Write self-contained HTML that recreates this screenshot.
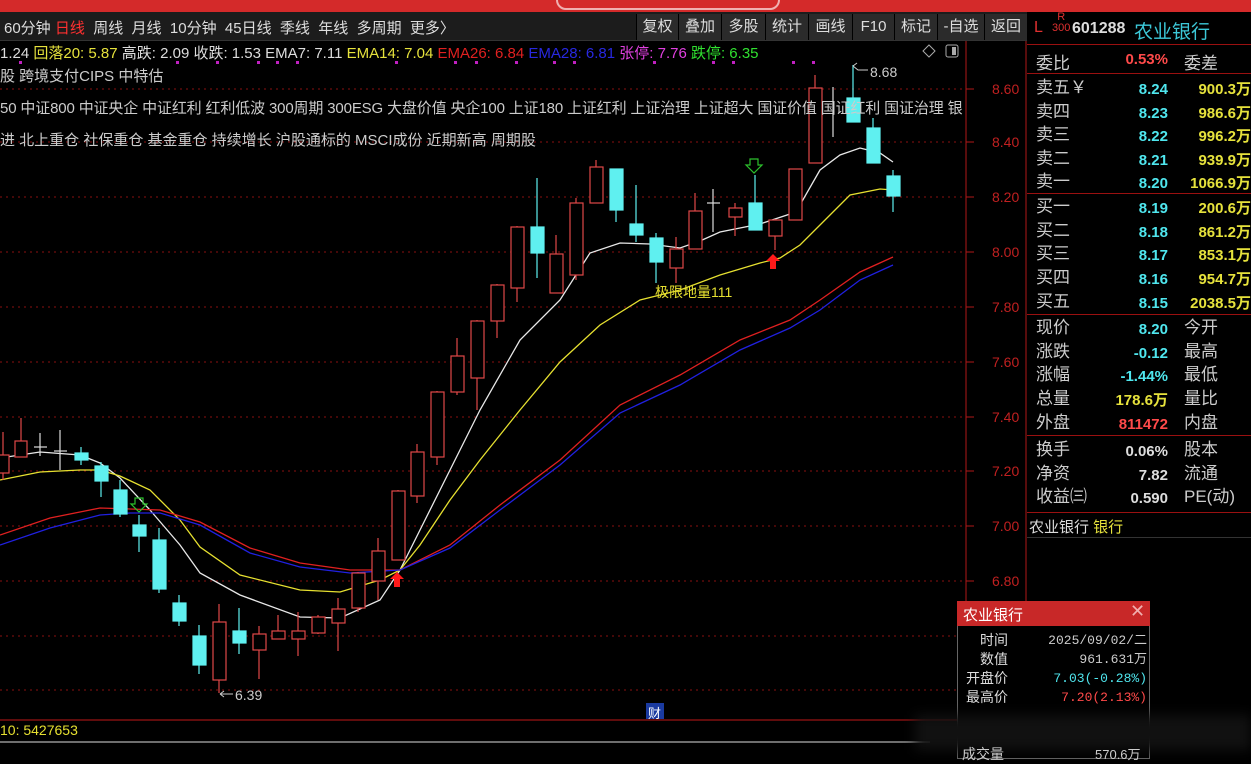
<!DOCTYPE html>
<html><head><meta charset="utf-8"><style>
*{margin:0;padding:0;box-sizing:border-box}
body{width:1251px;height:759px;background:#000;overflow:hidden;position:relative;font-family:"Liberation Sans","Noto Sans CJK SC",sans-serif;color:#ccc}
.a{position:absolute;white-space:nowrap}
#top{left:0;top:0;width:1251px;height:12px;background:#d42a2a}
#tb{left:0;top:12px;width:1027px;height:29px;background:#1c1c1c;border-bottom:1px solid #333}
.tl{top:17px;font-size:15px;color:#ddd}
.btn{top:14px;height:26px;background:#2b2b2b;border-left:1px solid #000;font-size:15px;color:#ddd;line-height:26px;text-align:center}
.rp{font-size:17px;color:#ccc}
.v{font-size:15px;font-weight:bold;text-align:right}
.cy{color:#4fe6ee}.ye{color:#e6e23c}.rd{color:#ff4a4a}.wh{color:#ddd}
.sep{left:1027px;width:224px;height:1px;background:#9a1010}
</style></head><body>
<div id="top" class="a"></div>
<div class="a" style="left:556px;top:-10px;width:224px;height:20px;border:2px solid #f0b0b0;border-radius:10px"></div>
<div id="tb" class="a"></div>
<div class="a tl" style="left:4px">60分钟 <span style="color:#ff3030">日线</span> &nbsp;周线 &nbsp;月线 &nbsp;10分钟 &nbsp;45日线 &nbsp;季线 &nbsp;年线 &nbsp;多周期 &nbsp;更多〉</div>
<div class="a btn" style="left:636px;width:42px">复权</div>
<div class="a btn" style="left:678px;width:43px">叠加</div>
<div class="a btn" style="left:721px;width:44px">多股</div>
<div class="a btn" style="left:765px;width:43px">统计</div>
<div class="a btn" style="left:808px;width:44px">画线</div>
<div class="a btn" style="left:852px;width:42px">F10</div>
<div class="a btn" style="left:894px;width:43px">标记</div>
<div class="a btn" style="left:937px;width:47px">-自选</div>
<div class="a btn" style="left:984px;width:43px">返回</div>

<svg class="a" style="left:0;top:0" width="1027" height="759">
<g stroke="#8a1010" stroke-width="1" stroke-dasharray="2,4">
<line x1="0" y1="89" x2="966" y2="89"/><line x1="0" y1="142" x2="966" y2="142"/><line x1="0" y1="197" x2="966" y2="197"/><line x1="0" y1="252" x2="966" y2="252"/><line x1="0" y1="307" x2="966" y2="307"/><line x1="0" y1="362" x2="966" y2="362"/><line x1="0" y1="417" x2="966" y2="417"/><line x1="0" y1="471" x2="966" y2="471"/><line x1="0" y1="526" x2="966" y2="526"/><line x1="0" y1="581" x2="966" y2="581"/><line x1="0" y1="636" x2="966" y2="636"/><line x1="0" y1="690" x2="966" y2="690"/>
</g>
<line x1="966" y1="41" x2="966" y2="720" stroke="#b01818"/>
<g stroke="#b01818"><line x1="966" y1="89" x2="974" y2="89"/><line x1="966" y1="142" x2="974" y2="142"/><line x1="966" y1="197" x2="974" y2="197"/><line x1="966" y1="252" x2="974" y2="252"/><line x1="966" y1="307" x2="974" y2="307"/><line x1="966" y1="362" x2="974" y2="362"/><line x1="966" y1="417" x2="974" y2="417"/><line x1="966" y1="471" x2="974" y2="471"/><line x1="966" y1="526" x2="974" y2="526"/><line x1="966" y1="581" x2="974" y2="581"/></g>
<g fill="#c02020" font-size="14" font-family="Liberation Sans,sans-serif">
<text x="992" y="94">8.60</text><text x="992" y="147">8.40</text><text x="992" y="202">8.20</text><text x="992" y="257">8.00</text><text x="992" y="312">7.80</text><text x="992" y="367">7.60</text><text x="992" y="422">7.40</text><text x="992" y="476">7.20</text><text x="992" y="531">7.00</text><text x="992" y="586">6.80</text>
</g>
<line x1="1026" y1="41" x2="1026" y2="759" stroke="#b01818"/>
<g fill="none" stroke-width="1.3">
<polyline stroke="#e8e8e8" points="0,458 40,452 80,455 100,463 120,478 150,510 180,545 200,573 240,595 300,617 340,618 380,600 400,570 420,530 450,470 480,410 520,340 560,300 590,253 620,243 650,244 680,248 700,241 720,232 760,224 790,214 800,205 820,170 840,155 860,148 880,153 893,162"/>
<polyline stroke="#e6e030" points="0,480 40,472 80,470 100,470 120,476 150,490 180,520 200,547 240,575 300,590 340,592 380,580 400,570 420,545 450,500 480,460 520,410 560,362 600,325 640,300 680,290 720,275 760,263 780,258 800,245 820,225 850,195 880,189 893,190"/>
<polyline stroke="#e02020" points="0,535 50,518 100,508 130,509 160,510 200,522 250,548 300,563 350,570 400,570 450,545 500,505 560,460 620,405 680,375 740,340 790,320 820,300 860,272 893,257"/>
<polyline stroke="#2020e0" points="0,545 50,528 100,515 130,513 160,513 200,525 250,553 300,567 350,573 400,570 450,548 500,510 560,465 620,413 680,385 740,350 790,328 820,310 860,280 893,265"/>
</g>
<g stroke="#e04848" fill="#000" stroke-width="1.2">
<line x1="3" y1="432" x2="3" y2="480"/><rect x="-3" y="455" width="12" height="18"/>
<line x1="21" y1="418" x2="21" y2="457"/><rect x="15" y="441" width="12" height="16"/>
<line x1="219" y1="604" x2="219" y2="693"/><rect x="213" y="622" width="13" height="58"/>
<line x1="259" y1="626" x2="259" y2="679"/><rect x="253" y="634" width="13" height="16"/>
<line x1="278" y1="615" x2="278" y2="639"/><rect x="272" y="631" width="13" height="8"/>
<line x1="298" y1="612" x2="298" y2="656"/><rect x="292" y="631" width="13" height="8"/>
<line x1="318" y1="615" x2="318" y2="634"/><rect x="312" y="617" width="13" height="16"/>
<line x1="338" y1="598" x2="338" y2="651"/><rect x="332" y="609" width="13" height="14"/>
<line x1="358" y1="572" x2="358" y2="612"/><rect x="352" y="573" width="13" height="35"/>
<line x1="378" y1="538" x2="378" y2="600"/><rect x="372" y="551" width="13" height="30"/>
<line x1="398" y1="490" x2="398" y2="560"/><rect x="392" y="491" width="13" height="69"/>
<line x1="417" y1="444" x2="417" y2="503"/><rect x="411" y="452" width="13" height="44"/>
<line x1="437" y1="391" x2="437" y2="465"/><rect x="431" y="392" width="13" height="65"/>
<line x1="457" y1="338" x2="457" y2="395"/><rect x="451" y="356" width="13" height="36"/>
<line x1="477" y1="320" x2="477" y2="410"/><rect x="471" y="321" width="13" height="57"/>
<line x1="497" y1="284" x2="497" y2="338"/><rect x="491" y="285" width="13" height="36"/>
<line x1="517" y1="226" x2="517" y2="302"/><rect x="511" y="227" width="13" height="61"/>
<line x1="556" y1="235" x2="556" y2="293"/><rect x="550" y="254" width="13" height="39"/>
<line x1="576" y1="198" x2="576" y2="280"/><rect x="570" y="203" width="13" height="72"/>
<line x1="596" y1="160" x2="596" y2="203"/><rect x="590" y="167" width="13" height="36"/>
<line x1="676" y1="237" x2="676" y2="283"/><rect x="670" y="249" width="13" height="19"/>
<line x1="695" y1="193" x2="695" y2="249"/><rect x="689" y="211" width="13" height="38"/>
<line x1="735" y1="203" x2="735" y2="236"/><rect x="729" y="208" width="13" height="9"/>
<line x1="775" y1="219" x2="775" y2="250"/><rect x="769" y="220" width="13" height="16"/>
<line x1="795" y1="169" x2="795" y2="220"/><rect x="789" y="169" width="13" height="51"/>
<line x1="815" y1="75" x2="815" y2="163"/><rect x="809" y="88" width="13" height="75"/>
</g>
<g stroke="#ddd" stroke-width="1.2">
<line x1="40" y1="433" x2="40" y2="456"/><line x1="34" y1="447" x2="47" y2="447"/>
<line x1="60" y1="430" x2="60" y2="470"/><line x1="54" y1="451" x2="67" y2="451"/>
<line x1="713" y1="189" x2="713" y2="232"/><line x1="707" y1="203" x2="720" y2="203"/>
<line x1="833" y1="87" x2="833" y2="137"/>
</g>
<g stroke="#5ff0f0" fill="#5ff0f0" stroke-width="1.2">
<line x1="81" y1="447" x2="81" y2="465"/><rect x="75" y="453" width="13" height="7"/>
<line x1="101" y1="462" x2="101" y2="497"/><rect x="95" y="466" width="13" height="15"/>
<line x1="120" y1="480" x2="120" y2="517"/><rect x="114" y="490" width="13" height="24"/>
<line x1="139" y1="515" x2="139" y2="552"/><rect x="133" y="525" width="13" height="11"/>
<line x1="159" y1="528" x2="159" y2="593"/><rect x="153" y="540" width="13" height="49"/>
<line x1="179" y1="595" x2="179" y2="626"/><rect x="173" y="603" width="13" height="18"/>
<line x1="199" y1="625" x2="199" y2="674"/><rect x="193" y="636" width="13" height="29"/>
<line x1="239" y1="608" x2="239" y2="654"/><rect x="233" y="631" width="13" height="12"/>
<line x1="537" y1="178" x2="537" y2="278"/><rect x="531" y="227" width="13" height="26"/>
<line x1="616" y1="169" x2="616" y2="222"/><rect x="610" y="169" width="13" height="41"/>
<line x1="636" y1="185" x2="636" y2="242"/><rect x="630" y="224" width="13" height="11"/>
<line x1="656" y1="233" x2="656" y2="283"/><rect x="650" y="238" width="13" height="24"/>
<line x1="755" y1="175" x2="755" y2="230"/><rect x="749" y="203" width="13" height="27"/>
<line x1="853" y1="65" x2="853" y2="122"/><rect x="847" y="98" width="13" height="24"/>
<line x1="873" y1="118" x2="873" y2="163"/><rect x="867" y="128" width="13" height="35"/>
<line x1="893" y1="170" x2="893" y2="212"/><rect x="887" y="176" width="13" height="20"/>
</g>
<path d="M135,498 h8 v6 h4 l-8,8 l-8,-8 h4z" fill="none" stroke="#2cc02c" stroke-width="1.2"/>
<path d="M750,159 h8 v6 h4 l-8,8 l-8,-8 h4z" fill="none" stroke="#2cc02c" stroke-width="1.2"/>
<path d="M397,572 l7,7 h-4 v8 h-6 v-8 h-4z" fill="#ff1a1a"/>
<path d="M773,254 l7,7 h-4 v8 h-6 v-8 h-4z" fill="#ff1a1a"/>
<g font-family="Liberation Sans,sans-serif" font-size="14">
<text x="870" y="77" fill="#ccc">8.68</text><path d="M853,66 l4,-3 M853,66 l5,4 h10" stroke="#ccc" fill="none"/>
<text x="235" y="700" fill="#ccc">6.39</text><path d="M220,694 h13 M220,694 l4,-3 M220,694 l4,3" stroke="#ccc" fill="none"/>
</g>
<text x="655" y="297" fill="#e6e030" font-size="14" font-family="Liberation Sans,Noto Sans CJK SC,sans-serif">极限地量111</text>
<g fill="#c020c0"><rect x="19" y="61" width="3" height="3"/><rect x="176" y="61" width="3" height="3"/><rect x="216" y="61" width="3" height="3"/><rect x="257" y="61" width="3" height="3"/><rect x="276" y="61" width="3" height="3"/><rect x="296" y="61" width="3" height="3"/><rect x="395" y="61" width="3" height="3"/><rect x="454" y="61" width="3" height="3"/><rect x="475" y="61" width="3" height="3"/><rect x="515" y="61" width="3" height="3"/><rect x="553" y="61" width="3" height="3"/><rect x="573" y="61" width="3" height="3"/><rect x="653" y="61" width="3" height="3"/><rect x="712" y="61" width="3" height="3"/><rect x="732" y="61" width="3" height="3"/><rect x="792" y="61" width="3" height="3"/><rect x="812" y="61" width="3" height="3"/></g>
<path d="M929,45 l6,6 l-6,6 l-6,-6z" fill="none" stroke="#aaa"/>
<rect x="946" y="45" width="12" height="12" rx="2" fill="none" stroke="#aaa"/><rect x="952" y="47" width="4" height="8" fill="#aaa"/>
<line x1="0" y1="720" x2="1026" y2="720" stroke="#c01818"/>
<line x1="0" y1="742" x2="930" y2="742" stroke="#ddd"/>
<rect x="646" y="703" width="18" height="16" fill="#1a3aa0"/>
</svg>
<div class="a" style="left:648px;top:703px;font-size:13px;color:#fff">财</div>
<div class="a" style="left:0;top:722px;font-size:14px;color:#e6e030">10: 5427653</div>

<div class="a" style="left:0;top:42px;font-size:15px;color:#ddd">1.24 <span class="ye">回落20: 5.87</span> 高跌: 2.09 收跌: 1.53 EMA7: 7.11 <span class="ye">EMA14: 7.04</span> <span style="color:#e02020">EMA26: 6.84</span> <span style="color:#2828e0">EMA28: 6.81</span> <span style="color:#e040e0">张停: 7.76</span> <span style="color:#30e030">跌停: 6.35</span></div>
<div class="a" style="left:0;top:65px;font-size:15px;color:#ccc">股 跨境支付CIPS 中特估</div>
<div class="a" style="left:0;top:97px;font-size:15px;color:#ccc;letter-spacing:-0.15px">50 中证800 中证央企 中证红利 红利低波 300周期 300ESG 大盘价值 央企100 上证180 上证红利 上证治理 上证超大 国证价值 国证红利 国证治理 银</div>
<div class="a" style="left:0;top:129px;font-size:15px;color:#ccc">进 北上重仓 社保重仓 基金重仓 持续增长 沪股通标的 MSCI成份 近期新高 周期股</div>

<div class="a" style="left:1027px;top:12px;width:224px;height:29px;background:#000"></div>
<div class="a" style="left:1034px;top:19px;font-size:16px;color:#e03030">L</div>
<div class="a" style="left:1052px;top:12px;font-size:11px;color:#e03030;line-height:11px;text-align:center">R<br>300</div>
<div class="a" style="left:1072px;top:20px;font-size:16px;font-weight:bold;color:#ddd">601288</div>
<div class="a" style="left:1134px;top:17px;font-size:19px;color:#3cc8d8">农业银行</div>
<div class="a sep" style="top:44px"></div>
<div class="a rp" style="left:1036px;top:49px">委比</div><div class="a v rd" style="left:1110px;top:51px;width:58px">0.53%</div><div class="a rp" style="left:1184px;top:49px">委差</div>
<div class="a sep" style="top:73px"></div>
<div class="a rp" style="left:1036px;top:76px;line-height:23.5px">卖五￥<br>卖四<br>卖三<br>卖二<br>卖一</div>
<div class="a v cy" style="left:1110px;top:78px;width:58px;line-height:23.5px">8.24<br>8.23<br>8.22<br>8.21<br>8.20</div>
<div class="a v ye" style="left:1170px;top:78px;width:81px;line-height:23.5px">900.3万<br>986.6万<br>996.2万<br>939.9万<br>1066.9万</div>
<div class="a sep" style="top:193px"></div>
<div class="a rp" style="left:1036px;top:195px;line-height:23.7px">买一<br>买二<br>买三<br>买四<br>买五</div>
<div class="a v cy" style="left:1110px;top:197px;width:58px;line-height:23.7px">8.19<br>8.18<br>8.17<br>8.16<br>8.15</div>
<div class="a v ye" style="left:1170px;top:197px;width:81px;line-height:23.7px">200.6万<br>861.2万<br>853.1万<br>954.7万<br>2038.5万</div>
<div class="a sep" style="top:314px"></div>
<div class="a rp" style="left:1036px;top:316px;line-height:23.7px">现价<br>涨跌<br>涨幅<br>总量<br>外盘</div>
<div class="a v" style="left:1090px;top:318px;width:78px;line-height:23.7px"><span class="cy">8.20</span><br><span class="cy">-0.12</span><br><span class="cy">-1.44%</span><br><span class="ye">178.6万</span><br><span class="rd">811472</span></div>
<div class="a rp" style="left:1184px;top:316px;line-height:23.7px">今开<br>最高<br>最低<br>量比<br>内盘</div>
<div class="a sep" style="top:435px"></div>
<div class="a rp" style="left:1036px;top:438px;line-height:23.5px">换手<br>净资<br>收益㈢</div>
<div class="a v wh" style="left:1090px;top:440px;width:78px;line-height:23.5px">0.06%<br>7.82<br>0.590</div>
<div class="a rp" style="left:1184px;top:438px;line-height:23.5px">股本<br>流通<br>PE(动)</div>
<div class="a sep" style="top:512px"></div>
<div class="a" style="left:1029px;top:516px;font-size:15px;color:#ddd">农业银行 <span class="ye">银行</span></div>
<div class="a sep" style="top:537px;background:#333"></div>

<div class="a" style="left:957px;top:601px;width:193px;height:158px;background:#000;border:1px solid #666"></div>
<div class="a" style="left:957px;top:601px;width:193px;height:25px;background:#c82828"></div>
<div class="a" style="left:963px;top:604px;font-size:15px;color:#fff">农业银行</div>
<div class="a" style="left:1130px;top:601px;font-size:18px;color:#f0b0b0">✕</div>
<div class="a" style="left:962px;top:631px;font-size:14px;color:#ddd;line-height:19px;text-align:right;width:46px">时间<br>数值<br>开盘价<br>最高价</div>
<div class="a" style="left:1010px;top:631px;font-size:13px;line-height:19px;text-align:right;width:137px;font-family:'Liberation Mono','Noto Sans CJK SC',monospace"><span style="color:#ccc">2025/09/02/二</span><br><span style="color:#ccc">961.631万</span><br><span class="cy">7.03(-0.28%)</span><br><span class="rd">7.20(2.13%)</span></div>
<div class="a" style="left:915px;top:715px;width:336px;height:35px;background:#111;filter:blur(6px)"></div>
<div class="a" style="left:962px;top:744px;font-size:14px;color:#ccc">成交量</div>
<div class="a" style="left:1095px;top:744px;font-size:13px;color:#ccc">570.6万</div>
</body></html>
